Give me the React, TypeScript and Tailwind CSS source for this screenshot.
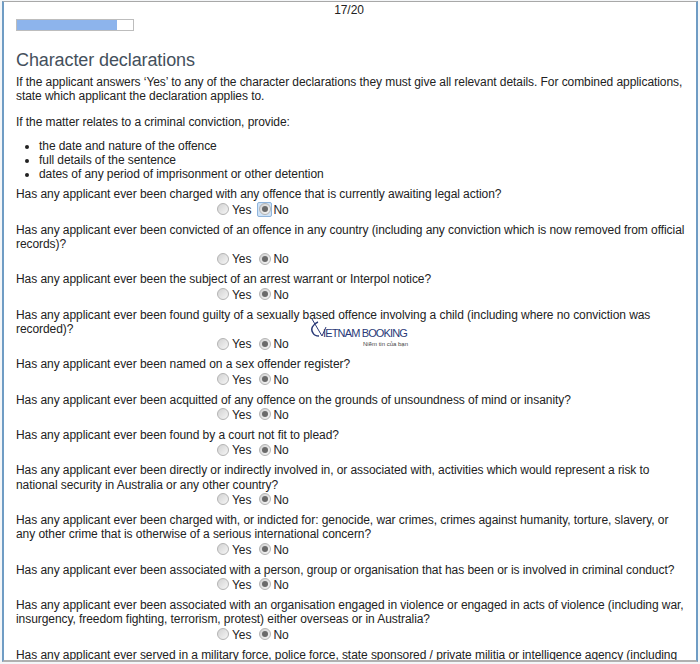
const questions = [
  { text: 'Has any applicant ever been charged with any offence that is currently awaiting legal action?', focus: true },
  { text: 'Has any applicant ever been convicted of an offence in any country (including any conviction which is now removed from official records)?' },
  { text: 'Has any applicant ever been the subject of an arrest warrant or Interpol notice?' },
  { text: 'Has any applicant ever been found guilty of a sexually based offence involving a child (including where no conviction was recorded)?' },
  { text: 'Has any applicant ever been named on a sex offender register?' },
  { text: 'Has any applicant ever been acquitted of any offence on the grounds of unsoundness of mind or insanity?' },
  { text: 'Has any applicant ever been found by a court not fit to plead?' },
  { text: 'Has any applicant ever been directly or indirectly involved in, or associated with, activities which would represent a risk to national security in Australia or any other country?' },
  { text: 'Has any applicant ever been charged with, or indicted for: genocide, war crimes, crimes against humanity, torture, slavery, or any other crime that is otherwise of a serious international concern?' },
  { text: 'Has any applicant ever been associated with a person, group or organisation that has been or is involved in criminal conduct?' },
  { text: 'Has any applicant ever been associated with an organisation engaged in violence or engaged in acts of violence (including war, insurgency, freedom fighting, terrorism, protest) either overseas or in Australia?' },
]

function Radio({ checked, focus }: { checked?: boolean; focus?: boolean }) {
  return (
    <span className={focus ? 'flex h-[15px] w-[15px] items-center justify-center rounded-[2px] border border-[#8fb4dc] bg-[#cfe3f7]' : 'flex h-[15px] w-[15px] items-center justify-center'}>
      <span className="flex h-[12px] w-[12px] items-center justify-center rounded-full border border-[#b4b4b4] bg-gradient-to-br from-[#d2d2d2] to-[#f6f6f6]">
        {checked && <span className="h-[6px] w-[6px] rounded-full bg-[#6a6a6a]" />}
      </span>
    </span>
  )
}

function Question({ text, focus }: { text: string; focus?: boolean }) {
  return (
    <div className="mb-[5.9px]">
      <p className="leading-[14.4px]">{text}</p>
      <div className="flex h-[15px] items-center pl-[199px] leading-[15px]">
        <Radio />
        <span className="ml-[2px] mt-[2px]">Yes</span>
        <span className="ml-[6px]"><Radio checked focus={focus} /></span>
        <span className="ml-[1px] mt-[2px]">No</span>
      </div>
    </div>
  )
}

export default function App() {
  return (
    <div className="h-[664px] w-[700px] overflow-hidden bg-[#f4f6f8] pl-[2px] pr-[2px] pt-[1px] font-['Liberation_Sans',Arial,sans-serif] text-[12px] tracking-[-0.065px] text-[#222]">
      <div className="relative h-[661px] overflow-hidden border-x-2 border-b-2 border-t border-x-[#6f9cc4] border-b-[#b0b0b0] border-t-[#a8a8a8] bg-white pl-[12px] pr-[10px] pt-[1px]">
        <div className="pr-[4px] text-center leading-[14px]">17/20</div>
        <div className="mt-[2px] h-[12px] w-[118px] border border-[#bdbdbd] bg-white">
          <div className="h-full w-[100px] bg-[#8db4ec]" />
        </div>
        <h1 className="mt-[18px] text-[18px] font-normal leading-[22px] tracking-[-0.1px] text-[#44505c]">Character declarations</h1>
        <p className="mt-[4px] leading-[14.4px]">
          If the applicant answers ‘Yes’ to any of the character declarations they must give all relevant details. For combined applications, state which applicant the declaration applies to.
        </p>
        <p className="mt-[11px] leading-[14.4px]">If the matter relates to a criminal conviction, provide:</p>
        <ul className="mb-[6px] mt-[10px] list-disc pl-[23px] leading-[14px]">
          <li>the date and nature of the offence</li>
          <li>full details of the sentence</li>
          <li>dates of any period of imprisonment or other detention</li>
        </ul>
        {questions.map(q => (
          <Question key={q.text} text={q.text} focus={q.focus} />
        ))}
        <p className="leading-[14.4px]">
          Has any applicant ever served in a military force, police force, state sponsored / private militia or intelligence agency (including
        </p>

        {/* watermark */}
        <div className="absolute left-[306px] top-[315px] h-[32px] w-[104px] text-[#2a3a78]">
          <svg className="absolute left-0 top-0" width="22" height="24" viewBox="0 0 22 24" fill="none">
            <path d="M2 2 L12 19 L16 10" stroke="currentColor" strokeWidth="1" />
            <path d="M8 5 C3 7 0 12 3 16 C4 18 6 19 9 19" stroke="currentColor" strokeWidth="1.5" />
          </svg>
          <span className="absolute left-[13px] top-[9px] whitespace-nowrap text-[11px] leading-[15px] tracking-[-0.85px]">IETNAM BOOKING</span>
          <span className="absolute left-[53px] top-[24px] whitespace-nowrap text-[6px] leading-[7px] tracking-[0px] text-[#444]">Niềm tin của bạn</span>
        </div>
      </div>
    </div>
  )
}
